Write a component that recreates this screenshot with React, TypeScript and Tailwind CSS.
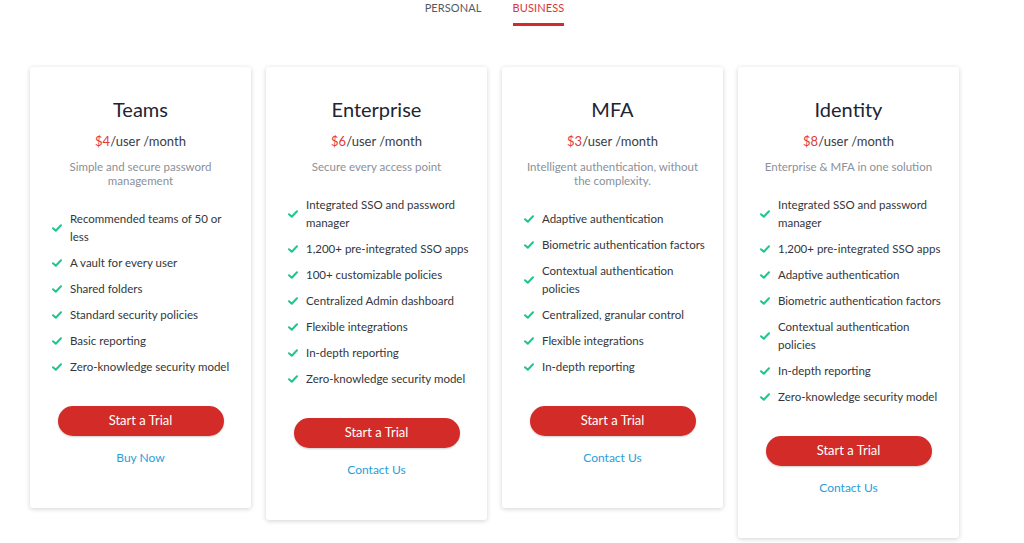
import React from "react";

type Plan = {
  name: string;
  price: string;
  desc: string;
  features: string[];
  link: string;
};

const plans: Plan[] = [
  {
    name: "Teams",
    price: "$4",
    desc: "Simple and secure password management",
    features: [
      "Recommended teams of 50 or less",
      "A vault for every user",
      "Shared folders",
      "Standard security policies",
      "Basic reporting",
      "Zero-knowledge security model",
    ],
    link: "Buy Now",
  },
  {
    name: "Enterprise",
    price: "$6",
    desc: "Secure every access point",
    features: [
      "Integrated SSO and password manager",
      "1,200+ pre-integrated SSO apps",
      "100+ customizable policies",
      "Centralized Admin dashboard",
      "Flexible integrations",
      "In-depth reporting",
      "Zero-knowledge security model",
    ],
    link: "Contact Us",
  },
  {
    name: "MFA",
    price: "$3",
    desc: "Intelligent authentication, without the complexity.",
    features: [
      "Adaptive authentication",
      "Biometric authentication factors",
      "Contextual authentication policies",
      "Centralized, granular control",
      "Flexible integrations",
      "In-depth reporting",
    ],
    link: "Contact Us",
  },
  {
    name: "Identity",
    price: "$8",
    desc: "Enterprise & MFA in one solution",
    features: [
      "Integrated SSO and password manager",
      "1,200+ pre-integrated SSO apps",
      "Adaptive authentication",
      "Biometric authentication factors",
      "Contextual authentication policies",
      "In-depth reporting",
      "Zero-knowledge security model",
    ],
    link: "Contact Us",
  },
];

function Check() {
  return (
    <svg width="10" height="8" viewBox="0 0 10 8" className="shrink-0">
      <path d="M1 4.2 L3.8 6.8 L9 1.2" fill="none" stroke="#1ec78a" strokeWidth="2" strokeLinecap="round" strokeLinejoin="round" />
    </svg>
  );
}

function Card({ plan }: { plan: Plan }) {
  return (
    <div className="w-[221px] shrink-0 bg-white rounded-[3px] shadow-[0_1px_5px_rgba(0,0,0,0.18)] pt-[30px] pb-[42px] flex flex-col items-center">
      <div className="text-[20px] leading-[24px] text-[#1d2433]">{plan.name}</div>
      <div className="mt-[11px] text-[13px] leading-[18px] text-[#3a3d42]">
        <span className="text-[#e03b3b]">{plan.price}</span>/user /month
      </div>
      <div className="mt-[10px] px-5 text-center text-[11.5px] leading-[14px] text-[#8b9099]">{plan.desc}</div>
      <ul className="mt-[22px] self-stretch pl-[22px] pr-[13px] flex flex-col gap-[8px]">
        {plan.features.map((f) => (
          <li key={f} className="flex items-center">
            <span className="w-[18px] shrink-0 flex">
              <Check />
            </span>
            <span className="text-[11.5px] leading-[18px] text-[#33363b]">{f}</span>
          </li>
        ))}
      </ul>
      <button className="mt-[30px] w-[166px] h-[30px] rounded-full bg-[#d32b27] text-white text-[13px] shadow-[0_1px_2px_rgba(0,0,0,0.2)]">
        Start a Trial
      </button>
      <a className="mt-[14px] text-[12px] leading-[16px] text-[#2a9ed8]">{plan.link}</a>
    </div>
  );
}

export default function App() {
  return (
    <div className="w-[1024px] h-[543px] overflow-hidden bg-white font-['Lato','Open_Sans',sans-serif]">
      <div className="flex justify-center gap-[31px] pr-[35px]">
        <div className="flex flex-col">
          <div className="text-[11px] leading-[16px] text-[#555a62] tracking-[0.1px]">PERSONAL</div>
        </div>
        <div className="flex flex-col">
          <div className="text-[11px] leading-[16px] text-[#d93636] tracking-[0.1px]">BUSINESS</div>
          <div className="mt-[7px] h-[3px] bg-[#d32b27]" />
        </div>
      </div>
      <div className="mt-[41px] pl-[30px] flex items-start gap-[15px]">
        {plans.map((p) => (
          <Card key={p.name} plan={p} />
        ))}
      </div>
    </div>
  );
}
